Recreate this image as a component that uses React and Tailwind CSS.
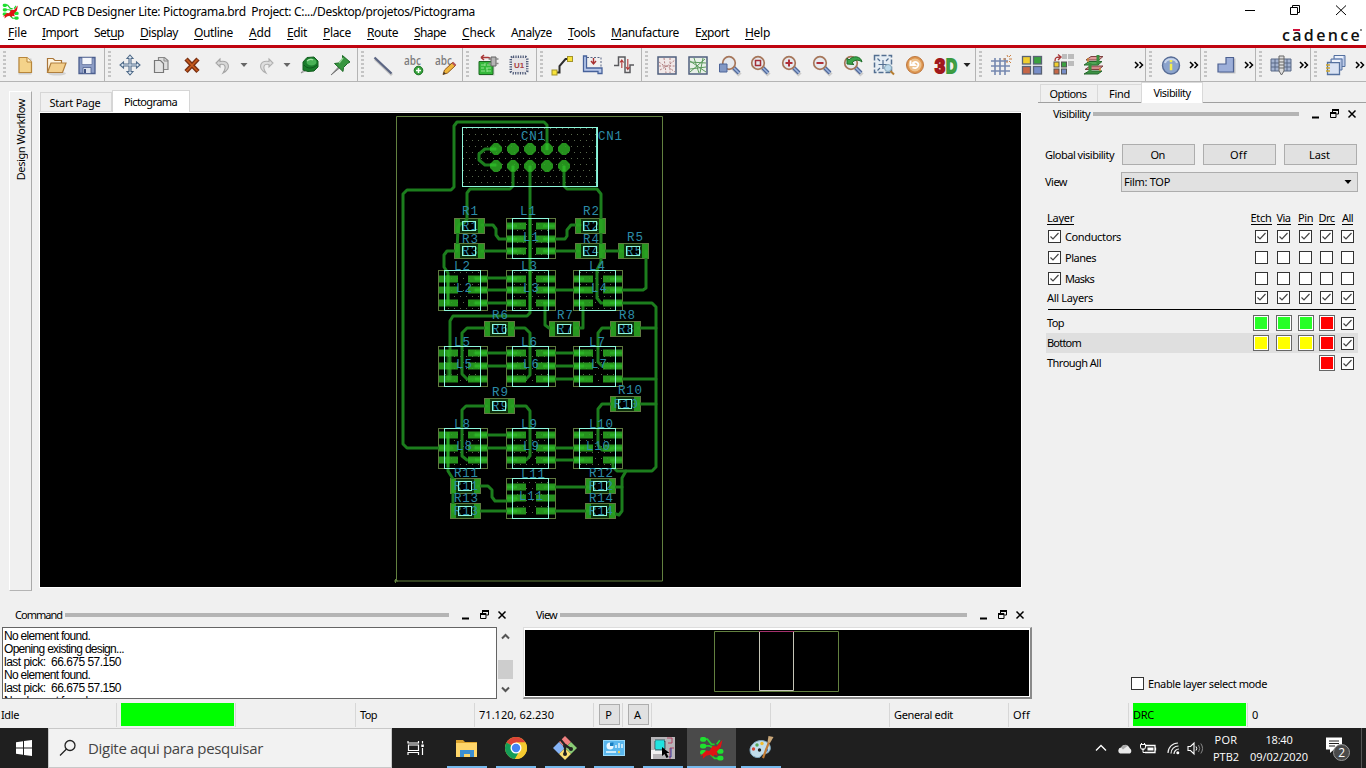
import React, { useLayoutEffect, useRef } from "react";

/* Text tuned to a fixed run width, as the native font metrics would give */
function T({ w, className = "", children }) {
  const ref = useRef(null);
  useLayoutEffect(() => {
    const el = ref.current;
    if (!w || !el) return;
    el.style.letterSpacing = "0px";
    const natural = el.getBoundingClientRect().width;
    el.style.letterSpacing = (w - natural) / el.textContent.length + "px";
  }, [w]);
  return (
    <span className="inline-block shrink-0">
      <span ref={ref} className={"inline-block whitespace-pre " + className}>{children}</span>
    </span>
  );
}

function Svg({ children, s = 24, vb = "0 0 24 24", className = "" }) {
  return <svg width={s} height={s} viewBox={vb} fill="none" className={"block shrink-0 overflow-visible " + className}>{children}</svg>;
}

const Shadow = () => <ellipse cx="13" cy="20.5" rx="9" ry="2" fill="#000" opacity=".12" />;

function Mag() {
  return (
    <>
      <path d="M14.500 15.500l6.500 6.500" stroke="#000" opacity=".15" strokeWidth="4.500" />
      <path d="M13.500 13.500l6.500 6.500" stroke="#51699b" strokeWidth="4" />
      <path d="M14 14l6 6" stroke="#9db6df" strokeWidth="1.500" />
      <circle cx="10" cy="10" r="6.300" fill="#e6e9ee" stroke="#a6765a" strokeWidth="1.700" />
    </>
  );
}

const I = {
  file: <Svg><path d="M5.500 5.500h13v16h-13z" fill="#000" opacity=".15" /><path d="M6 4.500h8l4.500 4.500v10.500H6z" fill="#f4d38a" stroke="#b8863b" strokeWidth="1.200" /><path d="M14 4.500V9h4.500" fill="#fff1cc" stroke="#b8863b" /></Svg>,
  open: <Svg><Shadow /><path d="M3.500 19V5.500h5.500l2 2h6.500V10" fill="#fff5e0" stroke="#a97539" strokeWidth="1.200" /><path d="M3.500 19.500 7 10h15l-3.500 9.500z" fill="#f3cf8c" stroke="#b07f3e" strokeWidth="1.200" /></Svg>,
  save: <Svg><path d="M4 4.500h16v16H4z" fill="#8d9dc6" stroke="#4c5f8f" strokeWidth="1.300" /><path d="M7 4.500h10v7H7z" fill="#f4f6fb" stroke="#5d6d98" strokeWidth=".7" /><path d="M8 14.500h8v6H8z" fill="#dfe4ef" stroke="#4c5f8f" strokeWidth=".8" /><path d="M10 16v4" stroke="#3f5181" strokeWidth="2" /></Svg>,
  move: <Svg><path d="M12 2l3 3.500h-2v5.500h5.500V9L22 12l-3.500 3v-2H13v5.500h2L12 22l-3-3.500h2V13H5.500v2L2 12l3.500-3v2H11V5.500H9z" fill="#e3ecf5" stroke="#506b89" strokeWidth="1.100" /></Svg>,
  copy: <Svg><path d="M9.500 4.500h6l3.500 3v9H9.500z" fill="#dedede" stroke="#888" strokeWidth="1.200" /><path d="M5.500 7.500h6l3 3v9h-9z" fill="#e4e4e4" stroke="#777" strokeWidth="1.200" /><path d="M15 4.500V8h4" stroke="#888" /></Svg>,
  del: <Svg><path d="M6 6l12 12.500M18 6 6 18.500" stroke="#792f11" strokeWidth="4.500" /><path d="M6.500 6.500l11 11.500M17.500 6.500 6.500 18" stroke="#c65a1c" strokeWidth="1.800" /></Svg>,
  undo: <Svg><path d="M9 6 5 10l4 4v-2.500c5-1 7 2 3 8.500 9-5 6-13-3-11.500z" fill="#d7d7d7" stroke="#a5a5a5" strokeWidth="1.100" /></Svg>,
  redo: <Svg><path d="M15 6l4 4-4 4v-2.500c-5-1-7 2-3 8.500C3 15 6 7 15 8.500z" fill="#dedede" stroke="#b0b0b0" strokeWidth="1.100" /></Svg>,
  zoomball: <Svg><path d="M4 20l4-5 2.500 2z" fill="#e0e0e0" stroke="#888" strokeWidth=".8" /><path d="M6 17V9l4-4.500 7-.5 4 4v6l-4 4-6 .5z" fill="#197c2b" stroke="#145e20" /><ellipse cx="14.500" cy="9" rx="5" ry="3.600" fill="#48b256" /><path d="M7 12c3 4 9 4 13 0" stroke="#0d5a1d" /><path d="M10 8c2-2 5-2 6-1" stroke="#a6e1a6" strokeWidth="1.200" /></Svg>,
  pin: <Svg><path d="M3 22l7.500-8 1 1z" fill="#aaa" stroke="#777" /><path d="M14.500 2.500 22 9l-2.500 1.500-4 4-.5 4-8.500-8 4-.5 4-4z" fill="#37963f" stroke="#1c6a25" /><path d="M15 5l-4 5" stroke="#96d597" strokeWidth="1.500" /></Svg>,
  line: <Svg><path d="M4 6l17 16" stroke="#000" opacity=".18" strokeWidth="3" /><path d="M3.500 4.500 20.500 20.500" stroke="#5c6683" strokeWidth="2.300" /></Svg>,
  abcAdd: <Svg><text x="2" y="12" fontSize="12" fontWeight="600" fontFamily="Open Sans, sans-serif" fill="#7c7c7c" textLength="17" lengthAdjust="spacingAndGlyphs">abc</text><circle cx="16.500" cy="17.500" r="4.300" fill="#36a13b" stroke="#16701f" /><path d="M16.500 15v5M14 17.500h5" stroke="#fff" strokeWidth="1.500" /></Svg>,
  abcEdit: <Svg><text x="2" y="12" fontSize="12" fontWeight="600" fontFamily="Open Sans, sans-serif" fill="#7c7c7c" textLength="17" lengthAdjust="spacingAndGlyphs">abc</text><path d="M10 21.500l1.500-4.500 8-7.500 3 3-8 7.500z" fill="#f0b73c" stroke="#8f5719" /><path d="M19.500 9.500l3 3" stroke="#b55555" strokeWidth="2.200" /><path d="M10 21.500l1-2.500 1.800 1.500z" fill="#333" /></Svg>,
  place: <Svg><path d="M3.500 9.500h15v13h-15z" fill="#000" opacity=".15" /><path d="M3 8.500h14v13H3z" fill="#34b83a" stroke="#1c6822" /><path d="M5 12h4m2 0h4M5 15h3m2 0h5M5 18h4m2 0h4M9 10v3m2 2v4" stroke="#9fe89a" strokeWidth=".9" /><path d="M5 4.500h7q2 0 2 2M5 4.500l3-2.500M5 4.500l3 2.500" stroke="#a83636" strokeWidth="1.500" /><path d="M15 4h5v9h-5z" fill="#b5b5b5" stroke="#636363" /><path d="M12.500 6H15m-2.500 4.500H15m5-4.500h2.500M20 10.500h2.500" stroke="#888" strokeWidth="1.500" /></Svg>,
  u1: <Svg><rect x="4" y="4" width="16" height="16" rx="2" fill="#dedee2" stroke="#4e5a78" strokeWidth="3" strokeDasharray="1.200 1.200" /><rect x="5" y="5" width="14" height="14" fill="#e5e4e7" /><text x="7" y="15" fontSize="8" fontWeight="bold" fontFamily="Liberation Sans, sans-serif" fill="#a93f3f">U1</text></Svg>,
  route: <Svg><path d="M5 19.500h4.500v-6.500l6-7H19" stroke="#2d2d2d" strokeWidth="2" /><rect x="2" y="17" width="5" height="5" fill="#f8e339" stroke="#a2932b" /><rect x="17.500" y="3.500" width="5" height="5" fill="#f8e339" stroke="#a2932b" /></Svg>,
  slide: <Svg><path d="M6 4.500h14v11" stroke="#5b6685" strokeDasharray="2 1.500" /><path d="M2.500 3h3v12H21v5.500H17v-2H2.500z" fill="#b8c9ea" stroke="#47629a" strokeWidth="1.300" /><path d="M12.500 5v5m-2.500-2 2.500 3L15 8" stroke="#a83131" strokeWidth="1.400" /></Svg>,
  delay: <Svg><path d="M2 12.500h4.500V4H13v15.500h5v-7.500h4" stroke="#5a5a5e" strokeWidth="1.500" /><path d="M9.800 15V7.500M8 9.500l1.800-2.500 1.800 2.500M15.800 6v10.500m-1.800-2.500 1.800 2.500 1.800-2.500" stroke="#b23b3b" strokeWidth="1.100" /></Svg>,
  rats: <Svg><rect x="3" y="4" width="18" height="17" fill="#f1e9e9" stroke="#4f5f7d" strokeWidth="1.500" /><path d="M4 9l7 5 9-7M5 17l7-4 8 6M9 5l2 15M15 5v15M4 13h16" stroke="#b48284" strokeDasharray="2 1.400" /></Svg>,
  rats2: <Svg><rect x="3" y="4" width="18" height="17" fill="#e8f0e8" stroke="#4f5f7d" strokeWidth="1.500" /><path d="M4 9l16 1M4 16l16-2M8 5l5 15M17 5l-3 15M4 8l16 11M4 19 19 6" stroke="#5b9a5c" /></Svg>,
  zfit: <Svg><g transform="translate(2 0)"><Mag /></g><path d="M2.500 11h7.500v8H2.500z" fill="#8398c4" stroke="#4d6498" /></Svg>,
  zwin: <Svg><Mag /><path d="M7.500 7.500h5v5h-5z" stroke="#a42d35" strokeWidth="1.500" /></Svg>,
  zin: <Svg><Mag /><path d="M10 6.500v7M6.500 10h7" stroke="#b03038" strokeWidth="2" /></Svg>,
  zout: <Svg><Mag /><path d="M6.500 10h7" stroke="#b03038" strokeWidth="2" /></Svg>,
  zprev: <Svg><Mag /><path d="M6 11V5l2 2c4-5 12-4 13 2-4-3-8-2-10 1l2 1.500z" fill="#38a349" stroke="#216e2c" /></Svg>,
  zsel: <Svg><rect x="2.500" y="2.500" width="17" height="17" fill="#e5edf4" stroke="#536f91" strokeWidth="1.500" strokeDasharray="5 2" /><path d="M11 7v9M6.500 11.500h9M5.500 5.500l2.500 2.500m8.500-2.500L14 8M5.500 17.500 8 15" stroke="#536f91" strokeWidth="1.200" /><path d="M18 17.500l4 4" stroke="#b67d30" strokeWidth="2" /><circle cx="16" cy="15" r="3.500" fill="#bcd9eb" stroke="#88a9bb" /></Svg>,
  refresh: <Svg><circle cx="12" cy="12" r="8.500" fill="#dd954e" stroke="#bd7841" /><circle cx="12" cy="12" r="6.500" fill="#edc18d" /><path d="M7.500 7.500v4.500H12l-2-2c3-2.500 6.500 0 5 3-1 2.500-3.500 2.500-5.500 1.500" fill="none" stroke="#fff" strokeWidth="1.800" /></Svg>,
  d3: <svg width="28" height="24" viewBox="0 0 28 24" className="block shrink-0 overflow-visible"><text x="3" y="19.500" fontSize="21" fontWeight="bold" fontFamily="Liberation Sans, sans-serif" fill="#ba1c20" stroke="#a0181c" strokeWidth="2.200" textLength="10" lengthAdjust="spacingAndGlyphs">3</text><text x="14" y="19.500" fontSize="21" fontWeight="bold" fontFamily="Liberation Sans, sans-serif" fill="#48a94d" stroke="#3a9a40" strokeWidth="2" textLength="11" lengthAdjust="spacingAndGlyphs">D</text></svg>,
  grid: <Svg><path d="M6 5v17M11 5v17M16 5v17M2 8h17M2 13h19M2 18h19" stroke="#7588b0" strokeWidth="1.600" /><path d="M18 2l1 2m3-2-2 2m3 2h-3m-3 0h-3m4 2v2m2-2 2 2" stroke="#cc8142" /></Svg>,
  colors: <Svg><rect x="2.500" y="3.500" width="8" height="7.500" fill="#f1cf2f" stroke="#596274" strokeWidth="1.300" /><rect x="13.500" y="3.500" width="8" height="7.500" fill="#3aa13f" stroke="#596274" strokeWidth="1.300" /><rect x="2.500" y="13.500" width="8" height="7.500" fill="#c66646" stroke="#596274" strokeWidth="1.300" /><rect x="13.500" y="13.500" width="8" height="7.500" fill="#778ec8" stroke="#596274" strokeWidth="1.300" /></Svg>,
  shadow: <Svg><path d="M11 1h5v5h-5zM17 1h6v5h-6zM17 8h6v5h-6z" fill="#bcbcbc" /><rect x="3" y="9" width="5" height="5" fill="#f1cf2f" stroke="#555" /><rect x="10.500" y="9" width="5" height="5" fill="#3aa13f" stroke="#555" /><rect x="3" y="16" width="5" height="5" fill="#c66646" stroke="#555" /><rect x="10.500" y="16" width="5" height="5" fill="#778ec8" stroke="#555" /><path d="M4 8C4 4 6 4 9 4M7 1.500 10 4 7 7" stroke="#a93939" strokeWidth="1.400" /></Svg>,
  layers: <Svg><path d="M7 18h13l-4 3H2z" fill="#3d9246" stroke="#26662d" /><path d="M8 13h13l-4 3.500H3z" fill="#cf8989" stroke="#7d4141" /><path d="M7 8.500h13l-4 3.500H2z" fill="#51a657" stroke="#26662d" /><path d="M9 3.500h12l-4 3.500H4z" fill="#df9c9c" stroke="#7d4141" /><path d="M16 2v9M8 10v10" stroke="#398f3e" strokeWidth="3" /><path d="M6 5v4M18 15v3" stroke="#c83" strokeWidth="1.500" /></Svg>,
  info: <Svg><circle cx="12" cy="12.500" r="8.500" fill="#8ba3cc" stroke="#586d96" strokeWidth="1.400" /><path d="M6 10c1-5 11-5 12 0" stroke="#c9d6eb" strokeWidth="2" /><path d="M12 7v2.300M12 10.800v6.500" stroke="#f5ee50" strokeWidth="2.500" /></Svg>,
  shape: <Svg><path d="M13 4.500h7.500v15H4.500v-8H13z" fill="#000" opacity=".18" transform="translate(1 1)" /><path d="M12 4.500h7.500v14.500H4v-8h8z" fill="#9dafd9" stroke="#4d6191" strokeWidth="1.200" /></Svg>,
  cut: <Svg><path d="M2 6h20v12H2z" fill="#a4b3d0" stroke="#596986" /><path d="M2 10h20M2 14h20M6 6v12m12-12v12" stroke="#596986" /><path d="M10 3h5v15l-2.500 4L10 18z" fill="#ddd" stroke="#666" /><path d="M10 6h5m-5 3h5m-5 3h5m-5 3h5" stroke="#666" /></Svg>,
  sheets: <Svg><path d="M10 2.500h11v11H10z" fill="#bccae8" stroke="#55719f" /><path d="M7 6h11v11H7z" fill="#bccae8" stroke="#55719f" /><path d="M3.500 9.500h12v12h-12z" fill="#d9e2f3" stroke="#55719f" strokeWidth="1.300" /><path d="M2 12h4m-4 3h4m-4 3h4" stroke="#d0a62c" strokeWidth="1.500" /><path d="M11 4h8M8 8h8" stroke="#edf2fb" strokeWidth="2" /></Svg>,
};

const Ib = ({ n }) => <div className="flex h-8 w-[31px] shrink-0 items-center justify-center">{I[n]}</div>;
const Dd = ({ dark }) => (
  <div className="flex w-3 shrink-0 justify-center">
    <Svg s={8} vb="0 0 8 8"><path d="M.500 2h7L4 6z" fill={dark ? "#222" : "#666"} /></Svg>
  </div>
);
const More = () => (
  <div className="ml-auto mr-[1px] flex items-center">
    <svg width="10" height="9" viewBox="0 0 10 9" fill="none"><path d="M1 1l3 3-3 3M5.500 1l3 3-3 3" stroke="#000" strokeWidth="1.500" /></svg>
  </div>
);
function Group({ className, children, last }) {
  return (
    <div className={"flex h-[34px] items-center " + (last ? "" : "border-r border-[#b4b4b4] ") + className}>
      <div className="ml-[3px] mr-[3px] h-7 w-[3px] shrink-0 bg-[repeating-linear-gradient(180deg,#c4c4c4_0px,#c4c4c4_2px,transparent_2px,transparent_4px)]" />
      {children}
    </div>
  );
}

const menus = [
  ["File", 0, 8, 19], ["Import", 0, 42, 36], ["Setup", 3, 94, 30], ["Display", 0, 140, 38], ["Outline", 0, 194, 39],
  ["Add", 0, 249, 22], ["Edit", 0, 287, 20], ["Place", 0, 323, 28], ["Route", 0, 367, 31], ["Shape", 0, 414, 32],
  ["Check", 0, 462, 33], ["Analyze", 1, 511, 41], ["Tools", 0, 568, 27], ["Manufacture", 0, 611, 68], ["Export", 1, 695, 34], ["Help", 0, 745, 25],
];

function Menu() {
  return (
    <div className="flex h-[23px] items-center bg-white pb-[2px] text-[12px]">
      {menus.map(([m, u, x, w], i) => {
        const next = i + 1 < menus.length ? menus[i + 1][2] : x + w + 20;
        return (
          <div key={m} className="flex shrink-0" style={{ width: next - x + (i === 0 ? x : 0), paddingLeft: i === 0 ? x : 0 }}>
            <T w={w}>{m.slice(0, u)}<u className="underline-offset-2">{m[u]}</u>{m.slice(u + 1)}</T>
          </div>
        );
      })}
      <div className="relative ml-auto mr-1 mt-[6px] font-['Open_Sans',sans-serif] text-[16px] font-semibold leading-[15px] text-[#111]">
        <T w={80}>cadence</T>
        <div className="absolute left-[11px] top-[1px] h-[2px] w-[7px] bg-[#d0103a]" />
        <div className="absolute right-0 top-[1px] h-[2px] w-[2px] rounded-full bg-[#666]" />
      </div>
    </div>
  );
}

function BoardLogo({ s }) {
  return (
    <Svg s={s}>
      <path d="M4 3h4l4 5h3M4 9.500h6l4 2M4 15.500h5l6 6h6M14 14.500h7M17 8l3-4" stroke="#1fd02f" strokeWidth="1.700" />
      <g fill="#1fe030"><rect x="1" y="1" width="6" height="4.500" rx="2" /><rect x="1" y="7.500" width="6" height="4.500" rx="2" /><rect x="1" y="13.500" width="6" height="4.500" rx="2" /><rect x="17.500" y="12.500" width="6" height="4.500" rx="2" /><rect x="17.500" y="19" width="6" height="4.500" rx="2" /></g>
      <path d="M1 19.500l6-5.500 3 .5 3-5 4 .5 5.500-6.500-1.500 7-4 4.500 1 4-3-1-1.500 2-2.500-2-4 1-3.500 3 .5-3.500z" fill="#e01313" />
    </Svg>
  );
}

function Caption({ title, w, className }) {
  return (
    <div className={"flex h-[16px] shrink-0 items-center text-[11px] " + className}>
      <div className="-mt-[2px]"><T w={w}>{title}</T></div>
      <div className="ml-[3px] h-[4px] flex-1 bg-[#b4b4b4]" />
      <svg width="57" height="12" viewBox="0 0 57 12" fill="none" className="ml-[6px] shrink-0">
        <path d="M7 9.500h7" stroke="#000" strokeWidth="2" />
        <path d="M27.500 4V1.500h6v4.500h-2M25.500 4.500h5.500v5h-5.500z" stroke="#000" />
        <path d="M27 2h7M25 5h6" stroke="#000" strokeWidth="2" />
        <path d="M43.500 2.500l7 7m0-7-7 7" stroke="#000" strokeWidth="1.500" />
      </svg>
    </div>
  );
}

const traces = [
  "547,149 547,125 544,122 457,122 454,126 454,187 451,190 407,190 403,194 403,444 407,448 452,448",
  "530,166 530,313 527,316 453,316 450,321 450,379",
  "513,166 513,186 510,189 470,189 467,193 467,219 464,223 460,224 458,228 457,251 447,251 444,255 444,267 448,273 448,303",
  "564,166 564,186 567,189 597,189 601,194 601,262 597,270 597,298 601,303 652,303 656,307 656,467 652,471 617,471 613,467 613,460",
  "496,149 485,149 479,154 479,160 485,165 496,165",
  "626,471 622,478 622,511 619,515 613,513", "612,487 622,487",
  "482,225 493,225 496,229 496,235 499,239 522,239",
  "545,239 565,239 567,236 567,230 571,225 580,225",
  "482,251 520,251", "545,251 579,251", "603,251 622,251", "646,251 646,288 643,290 615,290",
  "475,278 520,278", "475,290 520,290", "475,303 520,303", "545,290 590,290",
  "545,303 545,325 549,328 553,328", "575,328 583,328 583,303",
  "487,328 467,328 462,333 462,374 467,379 478,379", "512,328 525,328 530,333 530,375 526,379 515,379",
  "475,353 520,353", "475,366 520,366", "545,353 590,353", "545,366 590,366", "545,379 590,379",
  "612,328 602,328 598,333 598,362 602,366 612,366", "638,328 656,328", "615,379 656,379",
  "487,406 466,406 462,410 462,456 467,460 478,460", "512,406 526,406 530,411 530,456 526,460 515,460",
  "612,404 602,404 598,409 598,445 602,450 612,450", "638,404 656,404",
  "475,435 520,435", "475,448 520,448", "545,448 590,448", "545,460 590,460",
  "448,435 448,471 453,479 453,511", "478,486 488,486 492,490 492,497 495,501 513,501 517,499",
  "478,511 520,511", "545,487 590,487", "545,511 590,511",
];
const chips = [
  ["L1", 506, 218, [226, 239, 251], 520, 523, 237], ["L2", 438, 270, [279, 290, 303], 454, 456, 288], ["L3", 506, 270, [279, 290, 303], 521, 523, 288],
  ["L4", 573, 270, [279, 290, 303], 589, 591, 288], ["L5", 438, 346, [353, 366, 379], 454, 456, 364], ["L6", 506, 346, [353, 366, 379], 521, 523, 364],
  ["L7", 573, 346, [353, 366, 379], 589, 591, 364], ["L8", 438, 428, [435, 448, 460], 454, 456, 446], ["L9", 506, 428, [435, 448, 460], 521, 523, 446],
  ["L10", 573, 428, [435, 448, 460], 589, 586, 446], ["L11", 506, 478, [487, 498, 511], 521, 519, 496],
];
const res = [
  ["R1", 454, 218], ["R3", 454, 243], ["R2", 575, 218], ["R4", 575, 243], ["R5", 618, 243, 627], ["R6", 484, 321], ["R7", 549, 321], ["R8", 610, 321, 619],
  ["R9", 484, 398], ["R10", 610, 396, 618], ["R11", 450, 478, 454], ["R13", 450, 503, 454], ["R12", 585, 478, 589], ["R14", 585, 503, 589],
];

function Silk({ x, y, children, size = 12.5 }) {
  const n = children.length;
  return <text x={x} y={y} fontSize={size} textLength={n * 8} fontFamily="Liberation Mono, monospace" fill="#2c8ca8">{children}</text>;
}

function Board() {
  return (
    <svg width="981" height="474" viewBox="40 113 981 474" fill="none" className="block bg-black">
      <defs>
        <pattern id="dots" width="6" height="12" patternUnits="userSpaceOnUse">
          <rect x="1" y="2" width="1" height="1" fill="#5a694e" /><rect x="4" y="8" width="1" height="1" fill="#5a694e" />
        </pattern>
      </defs>
      <path d="M396.500 116.500h266v464.500h-266zM394 581h4M395.500 579v4" stroke="#62803f" />
      <rect x="462.500" y="127.500" width="135" height="59" fill="url(#dots)" />
      {chips.map(([n, x, y]) => (
        <g key={n}>
          <rect x={x + 0.5} y={y + 0.5} width="49" height="40" stroke="#5f7a40" />
          <rect x={x + 7} y={y + 1} width="36" height="39" fill="url(#dots)" />
        </g>
      ))}
      {res.map(([n, x, y]) => (
        <g key={n}>
          <rect x={x + 0.5} y={y + 0.5} width="30" height="15" fill="#0e300c" stroke="#5f7a40" />
          <rect x={x + 8} y={y + 3} width="14" height="10" fill="#000" />
        </g>
      ))}
      <g stroke="#1c7d1d" strokeWidth="3" strokeLinejoin="round" strokeLinecap="round">
        {traces.map((t) => <polyline key={t} points={t} />)}
      </g>
      <g fill="#2ba622" opacity=".88">
        {[496, 513, 530, 547, 564].map((x) => [149, 166].map((y) => <path key={x + "-" + y} d={`M${x - 2} ${y - 6}h4l4 4v4l-4 4h-4l-4-4v-4z`} />))}
        {chips.map(([n, x, , ys]) => ys.map((y) => <path key={n + y} d={`M${x + 1} ${y - 3.5}h19v7h-19zM${x + 30} ${y - 3.5}h19v7h-19z`} />))}
        {res.map(([n, x, y]) => <path key={n} d={`M${x + 1} ${y + 1}h5v14h-5zM${x + 24} ${y + 1}h6v14h-6z`} />)}
      </g>
      <g stroke="#2fcb2d" strokeWidth="3" opacity=".45">
        <path d="M547 144v6M530 166v5M513 166v5M564 166v5M490 149h6M490 165h6M448 275v30M448 350v30M448 432v35M530 218v41M530 270v41" />
        {chips.filter(([n]) => n !== "L11").map(([n, x, , ys]) => ys.map((y) => <path key={n + y} d={`M${x + 37} ${y}h12`} />))}
        {chips.filter(([, x]) => x > 500).map(([n, x, , ys]) => ys.map((y) => <path key={n + y} d={`M${x + 1} ${y}h10`} />))}
      </g>
      <rect x="462.500" y="127.500" width="135" height="59" stroke="#8ff7dc" />
      <path d="M596.500 128v58" stroke="#7fe9d0" />
      <Silk x={521} y={140}>CN1</Silk>
      <Silk x={598} y={140}>CN1</Silk>
      {chips.map(([n, x, y, , lx, ix, iy]) => (
        <g key={n}>
          <Silk x={lx} y={y === 218 ? 215 : y}>{n}</Silk>
          <Silk x={ix} y={iy + 4}>{n}</Silk>
          <rect x={x + 6.5} y={y + 0.5} width="36" height="40" stroke="#8ff7dc" />
        </g>
      ))}
      {res.map(([n, x, y, lx]) => (
        <g key={n}>
          <Silk x={lx || x + 8} y={y - (y === 218 ? 3 : y === 478 || y === 503 ? 1 : y === 243 ? (n === "R5" ? 2 : 0) : 2)}>{n}</Silk>
          <Silk x={n.length > 2 ? x + 4 : x + 8} y={y + 12} size={12}>{n}</Silk>
          <rect x={x + 8.5} y={y + 3.5} width="13" height="9" stroke="#8ff7dc" />
        </g>
      ))}
    </svg>
  );
}

function Check({ on }) {
  return (
    <span className="flex size-[13px] shrink-0 items-center justify-center border border-[#333] bg-white">
      {on && <svg width="11" height="11" viewBox="0 0 11 11" fill="none"><path d="M1.500 5.500l2.500 2.500 5.500-6" stroke="#444" strokeWidth="1.200" /></svg>}
    </span>
  );
}
const Sw = ({ c }) => (
  <span className="flex size-4 shrink-0 border border-[#666] bg-white p-[1px]">
    {c === "g" && <i className="flex-1 bg-[#27ff27]" />}
    {c === "y" && <i className="flex-1 bg-[#ffff00]" />}
    {c === "r" && <i className="flex-1 bg-[#ff0000]" />}
  </span>
);
const gridCols = "grid grid-cols-[204px_22px_23px_21px_21px_21px] items-center";
function Row({ name, w, check, cells, className }) {
  return (
    <div className={gridCols + " " + className}>
      <div className={"flex items-center gap-1 " + (check ? "pl-[2px]" : "pl-[1px]")}>{check && <Check on />}<div className="-mt-px"><T w={w}>{name}</T></div></div>
      {cells.split("").map((c, i) => (
        <div key={i} className="flex justify-center">{c === "1" ? <Check on /> : c === "0" ? <Check /> : c === "-" ? null : <Sw c={c} />}</div>
      ))}
    </div>
  );
}
const Btn = ({ children, w }) => <div className="flex h-[21px] w-[73px] items-center justify-center border border-[#adadad] bg-[#e1e1e1] pr-[2px]"><T w={w}>{children}</T></div>;

function Visibility() {
  return (
    <div className="flex w-[328px] shrink-0 flex-col text-[11px]">
      <div className="flex h-[21px] items-end border-b border-[#a0a0a0] pl-[2px]">
        <div className="flex h-[18px] w-[58px] items-center justify-center border border-b-0 border-[#d9d9d9] pr-[2px]"><T w={37}>Options</T></div>
        <div className="flex h-[18px] w-[43px] items-center justify-center border-t border-[#d9d9d9]"><T w={21}>Find</T></div>
        <div className="-mb-px flex h-[21px] w-[62px] items-center justify-center border border-b-0 border-[#d9d9d9] bg-white pb-px"><T w={37}>Visibility</T></div>
      </div>
      <Caption title="Visibility" w={37} className="mt-[3px] pl-[15px] pr-[4px]" />
      <div className="mt-[22px] flex items-center pl-[7px]">
        <div className="w-[77px]"><T w={69}>Global visibility</T></div>
        <div className="flex gap-2"><Btn w={14}>On</Btn><Btn w={17}>Off</Btn><Btn w={21}>Last</Btn></div>
      </div>
      <div className="mt-[7px] flex items-center pl-[7px]">
        <div className="-mt-[2px] w-[76px]"><T w={22}>View</T></div>
        <div className="flex h-5 w-[237px] items-center justify-between border border-[#adadad] bg-[#e1e1e1] pl-[2px] pr-[5px]">
          <div className="-mt-[2px]"><T w={46}>Film: TOP</T></div>
          <Svg s={8} vb="0 0 8 8"><path d="M.500 2h7L4 6z" fill="#000" /></Svg>
        </div>
      </div>
      <div className="ml-2 mt-[17px] w-[312px]">
        <div className={gridCols + " h-[17px]"}>
          <div className="pl-[1px]"><T w={27} className="border-b border-black leading-[13px]">Layer</T></div>
          {[["Etch", 21], ["Via", 14], ["Pin", 15], ["Drc", 16], ["All", 11]].map(([t, w]) => (
            <div key={t} className="flex justify-center"><T w={w} className="border-b border-black leading-[13px]">{t}</T></div>
          ))}
        </div>
        <Row name="Conductors" w={56} check cells="11111" className="h-[21px]" />
        <Row name="Planes" w={31} check cells="00000" className="h-[21px]" />
        <Row name="Masks" w={29} check cells="00000" className="h-[21px]" />
        <Row name="All Layers" w={46} cells="11111" className="h-[17px]" />
        <div className="mb-[3px] ml-[2px] mt-[3px] h-px w-[308px] bg-black" />
        <Row name="Top" w={17} cells="gggr1" className="h-5" />
        <Row name="Bottom" w={34} cells="yyyr1" className="h-5 bg-[#dfdfdf]" />
        <Row name="Through All" w={54} cells="---r1" className="h-5" />
      </div>
      <div className="mb-[10px] ml-[93px] mt-auto flex items-center gap-1"><Check /><T w={119}>Enable layer select mode</T></div>
    </div>
  );
}

const log = [["No element found.", 86], ["Opening existing design...", 120], ["last pick:  66.675 57.150", 117], ["No element found.", 86], ["last pick:  66.675 57.150", 117], ["No element found.", 86]];

function Bottom() {
  return (
    <div className="flex h-[94px] text-[11px]">
      <div className="w-[523px]">
        <Caption title="Command" w={47} className="pl-[15px] pr-[11px]" />
        <div className="mt-[4px] flex">
          <div className="ml-[2px] h-[72px] w-[495px] overflow-hidden border border-[#646464] bg-white pl-px pt-[2px] font-['Liberation_Sans',sans-serif] text-[12px] leading-[13px] text-black">
            {log.map(([t, w], i) => <div key={i} className="h-[13px]"><T w={w}>{t}</T></div>)}
          </div>
          <div className="flex h-[72px] w-[17px] flex-col items-center justify-between py-[5px]">
            <Svg s={9} vb="0 0 9 9"><path d="M1 6.500 4.500 3 8 6.500" stroke="#555" strokeWidth="2" /></Svg>
            <div className="mt-3 h-[19px] w-[15px] bg-[#cdcdcd]" />
            <Svg s={9} vb="0 0 9 9"><path d="M1 2.500 4.500 6 8 2.500" stroke="#555" strokeWidth="2" /></Svg>
          </div>
        </div>
      </div>
      <div className="w-[509px]">
        <Caption title="View" w={21} className="pl-[13px] pr-[2px]" />
        <div className="mt-[4px] h-[72px] border-b-2 border-r-2 border-[#8a8a8a] border-l border-t border-l-[#ddd] border-t-[#ddd] bg-white p-px">
          <svg width="504" height="66" viewBox="525 630 504 66" fill="none" className="mt-[1px] block bg-black">
            <path d="M714.500 631.500h124v60h-124z" stroke="#62803f" />
            <path d="M759.500 632v58.500h34V632" stroke="#c6c6b8" />
            <path d="M759 631.500h35" stroke="#a4306c" />
          </svg>
        </div>
      </div>
    </div>
  );
}

const Cell = ({ className, children }) => <div className={"flex h-[24px] shrink-0 items-center border-r border-[#d7d7d7] " + className}>{children}</div>;
const PBtn = ({ children }) => <div className="ml-[5px] flex size-[21px] items-center justify-center border border-[#adadad] bg-[#e1e1e1] pr-[2px]">{children}</div>;

function Status() {
  return (
    <div className="flex h-[27px] items-center text-[11px]">
      <Cell className="w-[117px] pl-[1px]"><T w={18}>Idle</T></Cell>
      <Cell className="w-[119px] pl-1"><div className="h-[23px] w-[113px] bg-[#00ff00]" /></Cell>
      <Cell className="w-[120px]" />
      <Cell className="w-[119px] pl-[4px]"><T w={17}>Top</T></Cell>
      <Cell className="w-[119px] pl-[4px]"><T w={75}>71.120, 62.230</T></Cell>
      <Cell className="w-[29px]"><PBtn>P</PBtn></Cell>
      <Cell className="w-[29px]"><PBtn>A</PBtn></Cell>
      <Cell className="w-[119px]" />
      <Cell className="w-[119px]" />
      <Cell className="w-[119px] pl-[4px]"><T w={59}>General edit</T></Cell>
      <Cell className="w-[120px] pl-[4px]"><T w={17}>Off</T></Cell>
      <Cell className="w-[119px] pl-1"><div className="flex h-[23px] w-[113px] items-center bg-[#00ff00]"><T w={21}>DRC</T></div></Cell>
      <div className="pl-1">0</div>
    </div>
  );
}

const apps = {
  explorer: <Svg><path d="M1 4h7l2 2h12v15H1z" fill="#dca42e" /><path d="M1 7h21v14H1z" fill="#ffd66a" /><path d="M5 21v-7h14v7h-4v-3H9v3z" fill="#3c8fd3" /></Svg>,
  chrome: <Svg><circle cx="12" cy="12" r="11" fill="#f3c62e" /><path d="M12 12 2.500 6.500A11 11 0 0 1 21.500 6.500H12z" fill="#dc4437" /><path d="M12 12 2.500 6.500A11 11 0 0 0 11 23l5-9z" fill="#149d58" /><path d="M12 6.500h9.500A11 11 0 0 1 11 23l5.500-9z" fill="#f5ca30" /><circle cx="12" cy="12" r="5.500" fill="#fff" /><circle cx="12" cy="12" r="4.200" fill="#4284f4" /></Svg>,
  git: <Svg><path d="M12 0l6 6-6 6-6-6z" fill="#ef8080" /><path d="M6 6l6 6-6 6-6-6z" fill="#85b3f6" /><path d="M18 6l6 6-6 6-6-6z" fill="#89cb75" /><path d="M12 12l6 6-6 6-6-6z" fill="#fbdf73" /><path d="M7 3l5 6v10M12 9l6 4" stroke="#222" strokeWidth="2.200" /><circle cx="12" cy="18" r="2" fill="#222" /><circle cx="12" cy="10" r="2" fill="#222" /><circle cx="18" cy="13" r="2" fill="#222" /></Svg>,
  panel: <Svg><rect x="1.500" y="4.500" width="21" height="15" fill="#59b6ed" stroke="#98dafa" /><circle cx="8" cy="10" r="3.500" fill="#eaf7ff" /><path d="M8 10V6.500h3.500V10z" fill="#187fc2" /><path d="M14 12V9m3 3V7m3 5V8M4 16h10" stroke="#f0fbff" strokeWidth="1.400" /><circle cx="17" cy="16" r="1.200" fill="#f6d154" /></Svg>,
  capture: <Svg><path d="M0 1h24v22H0z" fill="#b7b5b8" /><path d="M0 14h11v4H2v5H0z" fill="#f1f1f1" /><rect x="4.500" y="4.500" width="9" height="9" fill="#1fe3e0" stroke="#063f48" strokeWidth="2.500" strokeDasharray="1 1" /><rect x="4.500" y="4.500" width="8.500" height="8.500" fill="#1fe3e0" /><path d="M16 2h5v5h-4M23 12h-4v11" stroke="#b34562" /><path d="M20 12v9h-2" stroke="#3b3b9c" /><path d="M11 11v9l2.500-2 2 4 2-1-2-4h3z" fill="#000" /></Svg>,
  board: <BoardLogo s={25} />,
  paint: <Svg><path d="M9 5c7-2 14 3 12 9-2 5-8 3-9 6-1 3-11 2-11-6 0-4 4-8 8-9z" fill="#c1ddec" stroke="#7fa9c1" /><circle cx="4.500" cy="13" r="1.700" fill="#d44734" /><circle cx="8" cy="9" r="1.700" fill="#54a758" /><circle cx="13" cy="7.500" r="1.700" fill="#f1bb2c" /><circle cx="17.500" cy="14" r="1.700" fill="#3c7ed1" /><circle cx="10.500" cy="14" r="1.700" fill="#1f1f1f" /><path d="M14 22l6-16" stroke="#c17b35" strokeWidth="2.200" /><path d="M18.500 6l1-6 5 1-3.500 6z" fill="#c9a678" /></Svg>,
};

function Taskbar() {
  return (
    <div className="flex h-10 bg-[#1f1f1f] font-['Open_Sans',sans-serif] text-white">
      <div className="flex w-12 items-center justify-center"><Svg s={16} vb="0 0 16 16"><path d="M0 2.300l7-1v6.200H0zM8 1.100 16 0v7.500H8zM0 8.500h7v6.200l-7-1zM8 8.500h8V16l-8-1.100z" fill="#fff" /></Svg></div>
      <div className="flex w-[344px] items-center border border-[#c8c8c8] bg-[#f2f2f2] pl-[10px] text-[15px] text-[#444]">
        <Svg s={18} vb="0 0 18 18"><circle cx="11" cy="6.500" r="5" stroke="#222" strokeWidth="1.300" /><path d="M7.500 10 1 16.500" stroke="#222" strokeWidth="1.300" /></Svg>
        <div className="ml-[11px]"><T w={175}>Digite aqui para pesquisar</T></div>
      </div>
      <div className="flex w-[50px] items-center justify-center pr-[2px]">
        <Svg s={18} vb="0 0 18 18"><path d="M1 2v2h10.500V2M1.500 6h10v5.500h-10zM1 16v-2.500h10.500V16M15.500 2v2.500M15.500 9v7" stroke="#fff" strokeWidth="1.200" /><rect x="14.300" y="5.500" width="2.500" height="2.500" fill="#fff" /></Svg>
      </div>
      {Object.keys(apps).map((k) => (
        <div key={k} className={"flex w-[49px] flex-col items-center justify-between pt-2 " + (k === "board" ? "bg-[#4a4a4a]" : "")}>
          {apps[k]}
          <div className={"h-[2px] bg-[#76b9ed] " + (k === "board" ? "w-full" : "w-10")} />
        </div>
      ))}
      <div className="ml-auto flex items-center text-[11px]">
        <Svg s={12} vb="0 0 12 12"><path d="M1 8.500 6 3.500l5 5" stroke="#fff" strokeWidth="1.300" /></Svg>
        <Svg s={17} vb="0 0 17 12" className="ml-[9px]"><path d="M4 11h10a3 3 0 0 0 0-5 5 5 0 0 0-9-1 3.200 3.200 0 0 0-1 6z" fill="#e9e9e9" /><path d="M5 5a5 5 0 0 1 7-2L7 7z" fill="#aaa" /></Svg>
        <Svg s={17} vb="0 0 17 17" className="ml-[7px]"><path d="M6 5.500h9v7H5M15.500 7.500v3" stroke="#fff" strokeWidth="1.300" /><path d="M7.500 7.500h6v3h-6z" fill="#fff" /><path d="M1.500 3v2M4.500 3v2M3 8v4.500h2" stroke="#fff" /><path d="M.500 4.500h5V7a2 2 0 0 1-5 0z" stroke="#fff" /></Svg>
        <Svg s={14} vb="0 0 14 14" className="ml-[9px]"><path d="M2 12A10 10 0 0 1 12 2M5 12.500A7.500 7.500 0 0 1 12.500 5M8 13a5 5 0 0 1 5-5" stroke="#eee" strokeWidth="1.200" /><circle cx="11.800" cy="11.800" r="1.500" fill="#fff" /></Svg>
        <Svg s={17} vb="0 0 17 17" className="ml-[7px]"><path d="M1 6.500h2.500L7 3v11l-3.500-3.500H1z" stroke="#fff" strokeWidth="1.100" /><path d="M9 6.500q1.500 2 0 4" stroke="#fff" /><path d="M11.500 5q2.500 3.500 0 7M13.800 3.500q3.500 5 0 10" stroke="#888" /></Svg>
        <div className="ml-[9px] flex w-[26px] flex-col items-center pb-px leading-[17px]"><T w={23}>POR</T><T w={26}>PTB2</T></div>
        <div className="ml-[11px] flex w-[58px] flex-col items-center pb-px leading-[17px]"><T w={27}>18:40</T><T w={58}>09/02/2020</T></div>
        <Svg s={26} vb="0 0 26 26" className="ml-[17px] mr-[10px]"><path d="M1 2.500h16v12H9l-4 3.500v-3.500H1z" fill="#fff" /><path d="M4 6h10M4 8.500h10M4 11h6" stroke="#1f1f1f" /><circle cx="16.500" cy="17.500" r="8" fill="#4a4a4a" stroke="#999" /><text x="13.300" y="22" fontSize="12" fill="#fff" fontFamily="Open Sans, sans-serif">2</text></Svg>
        <div className="h-10 w-[5px] border-l border-[#555]" />
      </div>
    </div>
  );
}

export default function App() {
  return (
    <div className="flex h-[768px] w-[1366px] flex-col overflow-hidden bg-[#f0f0f0] font-['Noto_Sans','Open_Sans',sans-serif] leading-[15px] text-black">
      <div className="flex h-[22px] items-center bg-white pl-[2px] text-[12px]">
        <BoardLogo s={17} />
        <div className="ml-1 mt-px"><T w={452}>{"OrCAD PCB Designer Lite: Pictograma.brd  Project: C:.../Desktop/projetos/Pictograma"}</T></div>
        <svg width="104" height="12" viewBox="0 0 104 12" fill="none" className="-mt-[2px] ml-auto mr-[18px]">
          <path d="M1 6.500h10M46.500 3.500h7v7h-7zM48.500 3.500v-2h7v7h-2M92 1.500l10 9.500m0-9.500-10 9.500" stroke="#000" />
        </svg>
      </div>
      <Menu />
      <div className="h-[3px] bg-[#c00410]" />
      <div className="flex h-[34px] border-b border-[#b4b4b4]">
        <Group className="w-[105px]"><Ib n="file" /><Ib n="open" /><Ib n="save" /></Group>
        <Group className="w-[253px]"><Ib n="move" /><Ib n="copy" /><Ib n="del" /><Ib n="undo" /><Dd /><Ib n="redo" /><Dd /><Ib n="zoomball" /><Ib n="pin" /></Group>
        <Group className="w-[105px]"><Ib n="line" /><Ib n="abcAdd" /><Ib n="abcEdit" /></Group>
        <Group className="w-[74px]"><Ib n="place" /><Ib n="u1" /></Group>
        <Group className="w-[105px]"><Ib n="route" /><Ib n="slide" /><Ib n="delay" /></Group>
        <Group className="w-[334px]">{["rats", "rats2", "zfit", "zwin", "zin", "zout", "zprev", "zsel", "refresh", "d3"].map((n) => <Ib key={n} n={n} />)}<Dd dark /></Group>
        <Group className="w-[170px]"><Ib n="grid" /><Ib n="colors" /><Ib n="shadow" /><Ib n="layers" /><More /></Group>
        <Group className="w-[55px]"><Ib n="info" /><More /></Group>
        <Group className="w-[55px]"><Ib n="shape" /><More /></Group>
        <Group className="w-[55px]"><Ib n="cut" /><More /></Group>
        <Group className="w-[55px]" last><Ib n="sheets" /><More /></Group>
      </div>
      <div className="flex h-[619px]">
        <div className="flex w-[1038px] shrink-0 flex-col">
          <div className="flex h-[525px]">
            <div className="ml-[9px] mt-[9px] flex h-[500px] w-[23px] justify-center border-l border-r border-t border-b border-b-[#b4b4b4] border-l-white border-r-[#a9a9a9] border-t-white pt-[7px] text-[11px]">
              <div className="rotate-180 self-start [writing-mode:vertical-rl]"><span className="tracking-[-0.42px]">Design Workflow</span></div>
            </div>
            <div className="ml-[7px] flex w-[983px] flex-col text-[11px]">
              <div className="flex h-[30px] items-end border-b border-[#dcdcdc] pl-px">
                <div className="flex h-[19px] w-[72px] items-center justify-center border border-b-0 border-[#d6d6d6] pr-[2px]"><T w={51}>Start Page</T></div>
                <div className="-mb-px flex h-[22px] w-[78px] items-center justify-center border border-b-0 border-[#d6d6d6] bg-white pr-[1px]"><T w={53}>Pictograma</T></div>
              </div>
              <div className="border border-white"><Board /></div>
            </div>
          </div>
          <Bottom />
        </div>
        <Visibility />
      </div>
      <Status />
      <Taskbar />
    </div>
  );
}
